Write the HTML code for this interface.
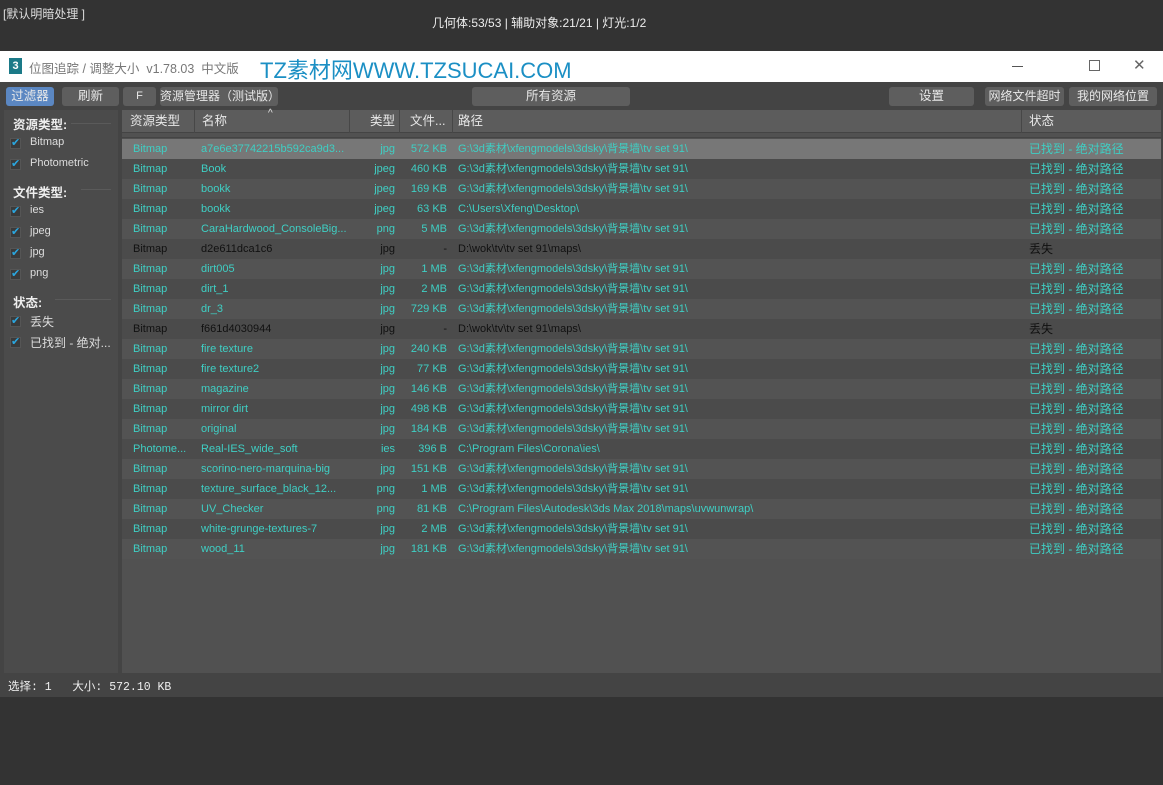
<!DOCTYPE html><html><head><meta charset="utf-8"><style>
*{margin:0;padding:0;box-sizing:border-box}
body{width:1163px;height:785px;background:#333;font-family:"Liberation Sans","Noto Sans CJK SC",sans-serif;font-size:12px;color:#ddd;position:relative;overflow:hidden}
.a{position:absolute;white-space:nowrap}
.btn{position:absolute;top:87px;height:19px;background:#5e5e5e;border-radius:3px;color:#e8e8e8;text-align:center;line-height:19px;font-size:12.5px;overflow:hidden}
.row{position:absolute;left:122px;width:1039px;height:20px;line-height:20px;font-size:11px;color:#3fcfc4}
.row span{position:absolute;white-space:nowrap}
.row.k{color:#111}
.cb{position:absolute;left:10px;width:11px;height:11px;background:#3a3a3a;border:1px solid #555}
.cb::after{content:"✔";position:absolute;left:0;top:-3px;color:#2aa7e0;font-size:11px}
.lp{position:absolute;left:30px;font-size:11px;color:#ddd}
.sec{position:absolute;left:13px;font-weight:bold;font-size:12.5px;color:#eee}
.ln{position:absolute;height:1px;background:#5a5a5a}
</style></head><body>
<div class="a" style="left:3px;top:5px;font-size:12px;color:#ddd">[默认明暗处理 ]</div>
<div class="a" style="left:432px;top:14px;font-size:12px;color:#eee">几何体:53/53 | 辅助对象:21/21 | 灯光:1/2</div>
<div class="a" style="left:0;top:51px;width:1163px;height:31px;background:#fff"></div>
<div class="a" style="left:9px;top:58px;width:13px;height:16px;background:#1b7a88;color:#fff;font-weight:bold;font-size:11px;text-align:center;line-height:16px">3</div>
<div class="a" style="left:29px;top:58px;font-size:12.5px;color:#777">位图追踪 / 调整大小 &nbsp;v1.78.03 &nbsp;中文版</div>
<div class="a" style="left:260px;top:53px;font-size:22px;color:#1b8fc4">TZ素材网WWW.TZSUCAI.COM</div>
<div class="a" style="left:1012px;top:66px;width:11px;height:1px;background:#555"></div>
<div class="a" style="left:1089px;top:60px;width:11px;height:11px;border:1px solid #666"></div>
<div class="a" style="left:1133px;top:56px;font-size:15px;color:#666">✕</div>
<div class="a" style="left:0;top:82px;width:1163px;height:615px;background:#444"></div>
<div class="btn" style="left:6px;width:48px;background:#5b87c2">过滤器</div>
<div class="btn" style="left:62px;width:57px">刷新</div>
<div class="btn" style="left:123px;width:33px;font-size:11px">F</div>
<div class="btn" style="left:160px;width:118px;font-size:12px">资源管理器（测试版）</div>
<div class="btn" style="left:472px;width:158px">所有资源</div>
<div class="btn" style="left:889px;width:85px">设置</div>
<div class="btn" style="left:985px;width:79px;font-size:12px">网络文件超时</div>
<div class="btn" style="left:1069px;width:88px;font-size:12px">我的网络位置</div>
<div class="a" style="left:4px;top:110px;width:114px;height:563px;background:#4b4b4b"></div>
<div class="sec" style="top:114px">资源类型:</div><div class="ln" style="left:71px;top:123px;width:40px"></div>
<div class="cb" style="top:138px"></div><div class="lp" style="top:136px">Bitmap</div>
<div class="cb" style="top:159px"></div><div class="lp" style="top:157px">Photometric</div>
<div class="sec" style="top:182px">文件类型:</div><div class="ln" style="left:81px;top:189px;width:30px"></div>
<div class="cb" style="top:206px"></div><div class="lp" style="top:204px">ies</div>
<div class="cb" style="top:227px"></div><div class="lp" style="top:225px">jpeg</div>
<div class="cb" style="top:248px"></div><div class="lp" style="top:246px">jpg</div>
<div class="cb" style="top:269px"></div><div class="lp" style="top:267px">png</div>
<div class="sec" style="top:292px">状态:</div><div class="ln" style="left:55px;top:299px;width:56px"></div>
<div class="cb" style="top:316px"></div><div class="lp" style="top:313px;font-size:12px">丢失</div>
<div class="cb" style="top:337px"></div><div class="lp" style="top:334px;font-size:12px">已找到 - 绝对...</div>
<div class="a" style="left:122px;top:110px;width:1039px;height:563px;background:#515151"></div>
<div class="a" style="left:122px;top:110px;width:1039px;height:23px;background:#5c5c5c;border-bottom:1px solid #444;font-size:12.5px;color:#e8e8e8;line-height:23px">
<span class="a" style="left:8px">资源类型</span><span class="a" style="left:72px;top:0;width:1px;height:23px;background:#474747"></span>
<span class="a" style="left:80px">名称</span><span class="a" style="left:146px;top:-8px;font-size:10px">^</span><span class="a" style="left:227px;width:1px;height:23px;background:#474747"></span>
<span class="a" style="left:248px">类型</span><span class="a" style="left:277px;width:1px;height:23px;background:#474747"></span>
<span class="a" style="left:288px">文件...</span><span class="a" style="left:330px;width:1px;height:23px;background:#474747"></span>
<span class="a" style="left:336px">路径</span><span class="a" style="left:899px;width:1px;height:23px;background:#474747"></span>
<span class="a" style="left:907px">状态</span></div>
<div class="a" style="left:122px;top:137px;width:1039px;height:1px;background:#444"></div>
<div id="rows"></div>
<div class="a" style="left:8px;top:678px;font-family:'Liberation Mono','Noto Sans CJK SC',monospace;font-size:11.5px;color:#eee">选择: 1 &nbsp;&nbsp;大小: 572.10 KB</div>
<script>
var d=[["Bitmap","a7e6e37742215b592ca9d3...","jpg","572 KB","G:\\3d素材\\xfengmodels\\3dsky\\背景墙\\tv set 91\\"],
["Bitmap","Book","jpeg","460 KB","G:\\3d素材\\xfengmodels\\3dsky\\背景墙\\tv set 91\\"],
["Bitmap","bookk","jpeg","169 KB","G:\\3d素材\\xfengmodels\\3dsky\\背景墙\\tv set 91\\"],
["Bitmap","bookk","jpeg","63 KB","C:\\Users\\Xfeng\\Desktop\\"],
["Bitmap","CaraHardwood_ConsoleBig...","png","5 MB","G:\\3d素材\\xfengmodels\\3dsky\\背景墙\\tv set 91\\"],
["Bitmap","d2e611dca1c6","jpg","-","D:\\wok\\tv\\tv set 91\\maps\\",1],
["Bitmap","dirt005","jpg","1 MB","G:\\3d素材\\xfengmodels\\3dsky\\背景墙\\tv set 91\\"],
["Bitmap","dirt_1","jpg","2 MB","G:\\3d素材\\xfengmodels\\3dsky\\背景墙\\tv set 91\\"],
["Bitmap","dr_3","jpg","729 KB","G:\\3d素材\\xfengmodels\\3dsky\\背景墙\\tv set 91\\"],
["Bitmap","f661d4030944","jpg","-","D:\\wok\\tv\\tv set 91\\maps\\",1],
["Bitmap","fire texture","jpg","240 KB","G:\\3d素材\\xfengmodels\\3dsky\\背景墙\\tv set 91\\"],
["Bitmap","fire texture2","jpg","77 KB","G:\\3d素材\\xfengmodels\\3dsky\\背景墙\\tv set 91\\"],
["Bitmap","magazine","jpg","146 KB","G:\\3d素材\\xfengmodels\\3dsky\\背景墙\\tv set 91\\"],
["Bitmap","mirror dirt","jpg","498 KB","G:\\3d素材\\xfengmodels\\3dsky\\背景墙\\tv set 91\\"],
["Bitmap","original","jpg","184 KB","G:\\3d素材\\xfengmodels\\3dsky\\背景墙\\tv set 91\\"],
["Photome...","Real-IES_wide_soft","ies","396 B","C:\\Program Files\\Corona\\ies\\"],
["Bitmap","scorino-nero-marquina-big","jpg","151 KB","G:\\3d素材\\xfengmodels\\3dsky\\背景墙\\tv set 91\\"],
["Bitmap","texture_surface_black_12...","png","1 MB","G:\\3d素材\\xfengmodels\\3dsky\\背景墙\\tv set 91\\"],
["Bitmap","UV_Checker","png","81 KB","C:\\Program Files\\Autodesk\\3ds Max 2018\\maps\\uvwunwrap\\"],
["Bitmap","white-grunge-textures-7","jpg","2 MB","G:\\3d素材\\xfengmodels\\3dsky\\背景墙\\tv set 91\\"],
["Bitmap","wood_11","jpg","181 KB","G:\\3d素材\\xfengmodels\\3dsky\\背景墙\\tv set 91\\"]];
var h="";d.forEach(function(r,i){var bg=i==0?"#777":(i%2?"#4b4b4b":"#535353");
h+='<div class="row'+(r[5]?' k':'')+'" style="top:'+(139+i*20)+'px;background:'+bg+'"><span style="left:11px">'+r[0]+'</span><span style="left:79px">'+r[1]+'</span><span style="right:766px">'+r[2]+'</span><span style="right:714px">'+r[3]+'</span><span style="left:336px">'+r[4]+'</span><span style="left:907px;font-size:12px">'+(r[5]?'丢失':'已找到 - 绝对路径')+'</span></div>';});
document.getElementById("rows").innerHTML=h;
</script>
</body></html>
